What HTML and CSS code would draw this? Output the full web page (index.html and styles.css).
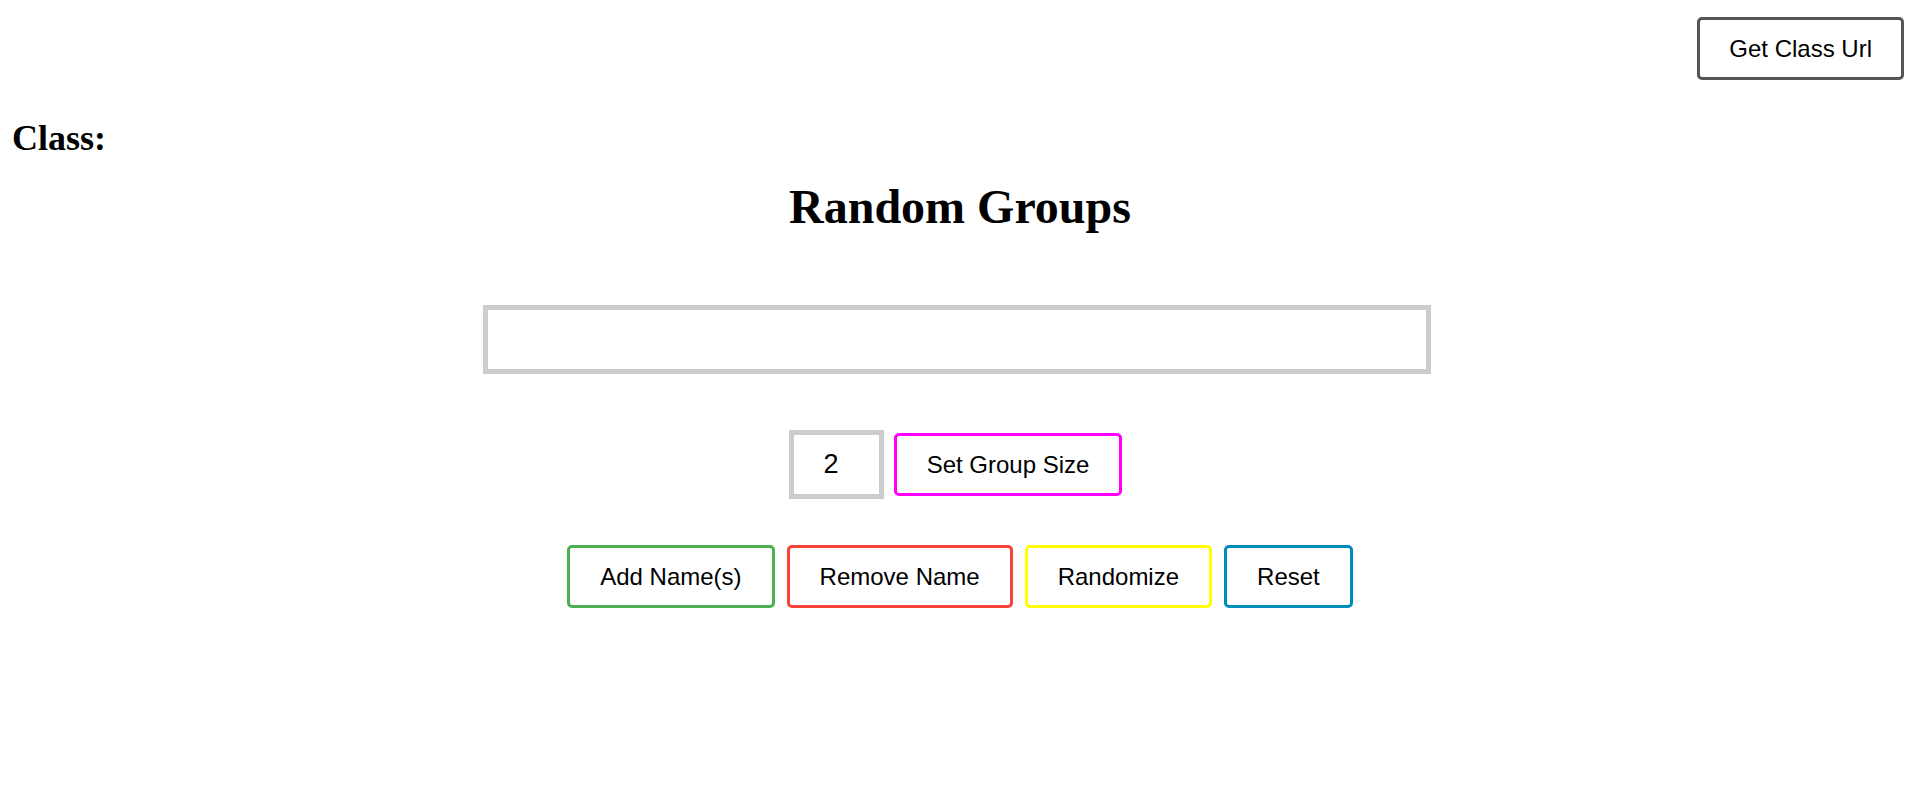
FILE: index.html
```html
<!DOCTYPE html>
<html lang="en">
<head>
<meta charset="utf-8">
<title>Random Groups</title>
<link rel="stylesheet" href="styles.css">
</head>
<body>
<div class="topbar">
  <button class="btn btn-url">Get Class Url</button>
</div>
<h2 class="class-title">Class:</h2>
<h1 class="page-title">Random Groups</h1>
<div class="name-row">
  <input class="name-input" type="text" aria-label="Names">
</div>
<div class="size-row">
  <input class="size-input" type="text" value="2" aria-label="Group size">
  <button class="btn btn-size">Set Group Size</button>
</div>
<div class="action-row">
  <button class="btn btn-add">Add Name(s)</button>
  <button class="btn btn-remove">Remove Name</button>
  <button class="btn btn-random">Randomize</button>
  <button class="btn btn-reset">Reset</button>
</div>
</body>
</html>
```
FILE: styles.css
```css
html, body {
  background: #ffffff;
}
body {
  margin: 0;
  padding: 0 12px;
  font-family: "Liberation Serif", "Times New Roman", serif;
  color: #000;
}
.topbar {
  display: flex;
  justify-content: flex-end;
  padding-top: 17px;
  padding-right: 4px;
}
.btn {
  box-sizing: border-box;
  height: 63px;
  padding: 0 30px;
  background: #ffffff;
  color: #000;
  border: 3px solid #555555;
  border-radius: 5px;
  font-family: "Liberation Sans", Arial, sans-serif;
  font-size: 24px;
  line-height: 1;
  cursor: pointer;
}
.btn-url { border-color: #555555; padding: 0 29px; }
.btn-size { border-color: #ff00ff; }
.btn-add { border-color: #4caf50; }
.btn-remove { border-color: #f44336; }
.btn-random { border-color: #ffff00; }
.btn-reset { border-color: #008cba; }

.class-title {
  margin: 40px 0 0;
  font-size: 36px;
  line-height: 36px;
  font-weight: bold;
}
.page-title {
  margin: 27px 0 0;
  text-align: center;
  font-size: 48px;
  line-height: 48px;
  font-weight: bold;
}
.name-row {
  display: flex;
  justify-content: center;
  margin-top: 74px;
  padding-right: 6px;
}
.name-input {
  box-sizing: border-box;
  width: 948px;
  height: 69px;
  margin: 0;
  border: 5px solid #cccccc;
  border-radius: 0;
  background: #ffffff;
  font-family: "Liberation Sans", Arial, sans-serif;
  font-size: 24px;
  padding: 0 10px;
  outline: none;
}
.size-row {
  display: flex;
  justify-content: center;
  align-items: center;
  gap: 10px;
  margin-top: 56px;
  padding-right: 9px;
}
.size-input {
  box-sizing: border-box;
  width: 95px;
  height: 69px;
  margin: 0;
  border: 5px solid #cccccc;
  border-radius: 0;
  background: #ffffff;
  padding: 0 10px 0 0;
  text-align: center;
  font-family: "Liberation Sans", Arial, sans-serif;
  font-size: 27px;
  color: #000;
  outline: none;
}
.action-row {
  display: flex;
  justify-content: center;
  gap: 12px;
  margin-top: 46px;
}
```
